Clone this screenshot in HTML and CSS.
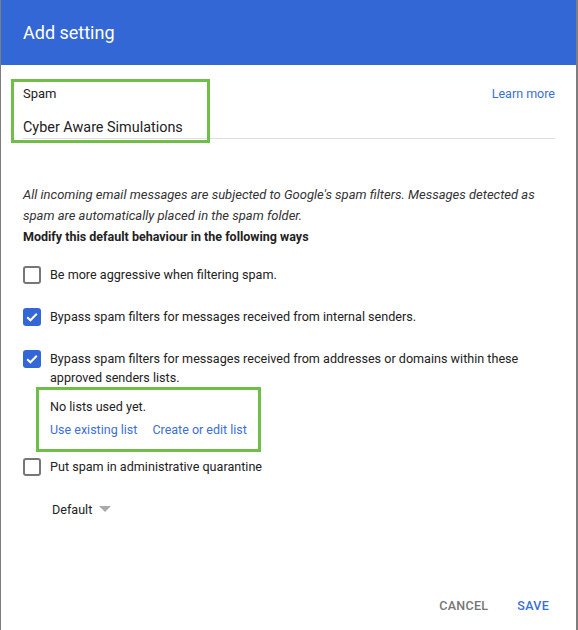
FILE: index.html
```html
<!doctype html>
<html lang="en">
 <head>
  <meta charset="UTF-8">
  <title>Add setting</title>
  <link rel="stylesheet" href="styles.css">
 </head>
 <body>
  <div class="dialog">
   <div class="d_header">Add setting</div>
   <div class="d_body">
    <!--setting name-->
    <div class="field">
     <div class="field_top">
      <span class="field_label">Spam</span>
      <a href="javascript:void(0);" class="link">Learn more</a>
     </div>
     <div class="field_value">Cyber Aware Simulations</div>
     <span class="mark mark_name"></span>
    </div>

    <p class="note">All incoming email messages are subjected to Google's spam filters. Messages detected as spam are automatically placed in the spam folder.</p>
    <p class="note_bold">Modify this default behaviour in the following ways</p>

    <ul class="opts">
     <li class="opt">
      <span class="box"></span>
      <span class="opt_text">Be more aggressive when filtering spam.</span>
     </li>
     <li class="opt">
      <span class="box on"><svg width="18" height="18" viewBox="0 0 18 18"><path d="M4.2 9.2l3.2 3.1 6.4-6.6" fill="none" stroke="#fff" stroke-width="2"/></svg></span>
      <span class="opt_text">Bypass spam filters for messages received from internal senders.</span>
     </li>
     <li class="opt">
      <span class="box on"><svg width="18" height="18" viewBox="0 0 18 18"><path d="M4.2 9.2l3.2 3.1 6.4-6.6" fill="none" stroke="#fff" stroke-width="2"/></svg></span>
      <span class="opt_text">Bypass spam filters for messages received from addresses or domains within these approved senders lists.</span>
     </li>
    </ul>

    <!--approved lists-->
    <div class="lists">
     <div class="lists_empty">No lists used yet.</div>
     <div class="lists_links">
      <a href="javascript:void(0);" class="link">Use existing list</a>
      <a href="javascript:void(0);" class="link">Create or edit list</a>
     </div>
     <span class="mark mark_lists"></span>
    </div>

    <ul class="opts">
     <li class="opt">
      <span class="box"></span>
      <span class="opt_text">Put spam in administrative quarantine</span>
     </li>
    </ul>

    <div class="select">Default <span class="caret"></span></div>
   </div>
   <div class="d_footer">
    <a href="javascript:void(0);" class="btn">CANCEL</a>
    <a href="javascript:void(0);" class="btn btn_save">SAVE</a>
   </div>
  </div>
 </body>
</html>
```

FILE: styles.css
```css
*{padding:0;margin:0;box-sizing:border-box;}
ul,li{list-style:none;}
a{text-decoration:none;}
body{background:#7d7d7d;font-family:Roboto,"Liberation Sans",sans-serif;color:#222;height:630px;overflow:hidden;}
.dialog{width:575px;height:630px;margin-left:1px;background:#fff;display:flex;flex-direction:column;}
.d_header{height:65px;background:#3367d6;color:#fff;font-size:18px;line-height:65px;padding-left:22px;}
.d_body{flex:1;padding:0 21px 0 22px;}
.link{color:#3b6fd4;font-size:12.5px;}

.field{position:relative;padding-top:20px;border-bottom:1px solid #dedede;}
.field_top{display:flex;justify-content:space-between;line-height:18px;}
.field_label{font-size:13px;color:#222;}
.field_value{font-size:14.4px;line-height:20px;margin-top:15px;}
.mark{position:absolute;border:3px solid #6fbe47;}
.mark_name{left:-12px;top:14px;width:199px;height:64px;}

.note{font-size:13px;font-style:italic;line-height:21px;color:#333;margin-top:45px;}
.note_bold{font-size:12.5px;font-weight:bold;line-height:22px;color:#222;}

.opt{display:flex;align-items:flex-start;margin-top:17px;}
.opt+.opt{margin-top:23px;}
.box{width:18px;height:18px;flex:none;border:2px solid #777;border-radius:3px;margin:1px 9px 0 0;}
.box.on{background:#3367d6;border:0;}
.box svg{display:block;}
.opt_text{font-size:12.6px;line-height:19px;color:#222;}

.lists{position:relative;margin:10px 0 0 27px;}
.lists_empty{font-size:12.6px;line-height:20px;}
.lists_links{display:flex;gap:15px;margin-top:3px;line-height:20px;}
.mark_lists{left:-14px;top:-10px;width:225px;height:65px;}
.lists+.opts .opt{margin-top:17px;}

.select{margin:24px 0 0 29px;font-size:12.6px;line-height:20px;color:#222;display:flex;align-items:center;}
.caret{width:0;height:0;border-left:6px solid transparent;border-right:6px solid transparent;border-top:6px solid #aaa;margin:-3px 0 0 7px;}

.d_footer{display:flex;justify-content:flex-end;gap:29px;padding:0 27px 14px 0;}
.btn{font-size:12.5px;font-weight:500;letter-spacing:.3px;color:#757575;line-height:20px;}
.btn_save{color:#3b6fd4;}
```
